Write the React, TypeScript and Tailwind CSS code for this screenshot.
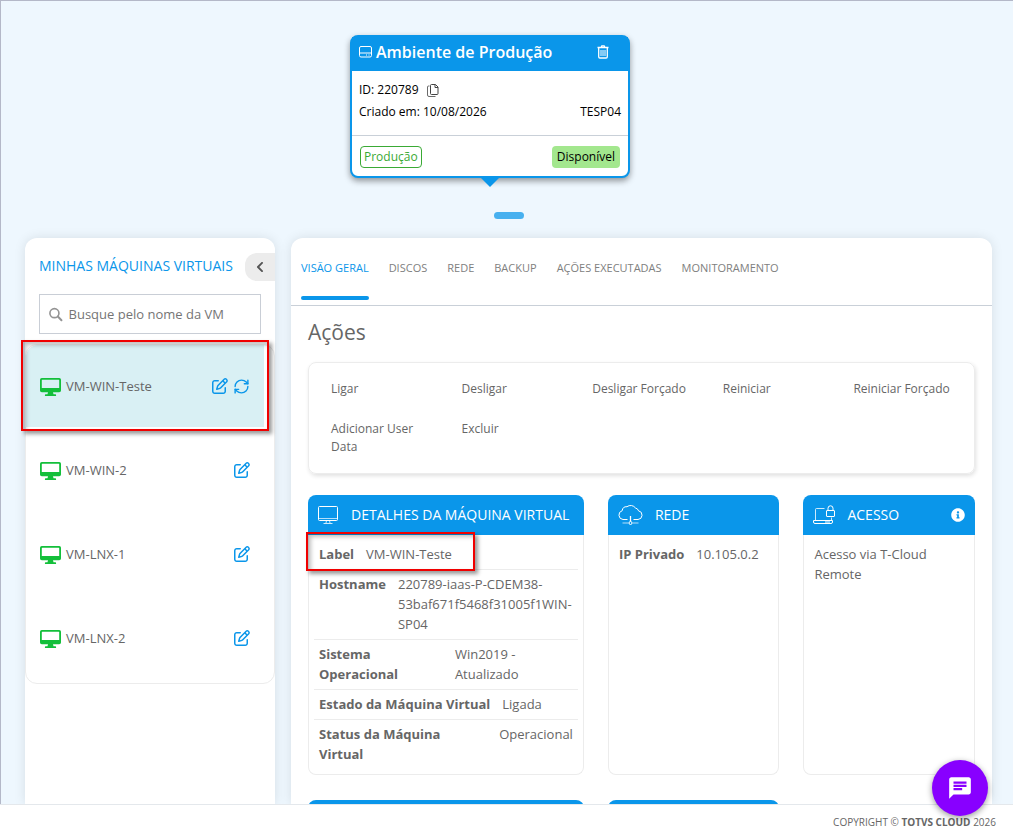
import { RefreshCw } from "lucide-react";
import { FaChevronLeft, FaInfoCircle } from "react-icons/fa";
import { FaRegPenToSquare } from "react-icons/fa6";
import { MdChat } from "react-icons/md";

const machines = ["VM-WIN-Teste", "VM-WIN-2", "VM-LNX-1", "VM-LNX-2"];

const tabs = [
  "VISÃO GERAL",
  "DISCOS",
  "REDE",
  "BACKUP",
  "AÇÕES EXECUTADAS",
  "MONITORAMENTO",
];

const actions = [
  "Ligar",
  "Desligar",
  "Desligar Forçado",
  "Reiniciar",
  "Reiniciar Forçado",
  "Adicionar User Data",
  "Excluir",
];

const details = [
  { label: "Label", value: "VM-WIN-Teste", highlight: true },
  { label: "Hostname", value: "220789-iaas-P-CDEM38-53baf671f5468f31005f1WIN-SP04" },
  { label: "Sistema Operacional", value: "Win2019 - Atualizado" },
  { label: "Estado da Máquina Virtual", value: "Ligada" },
  { label: "Status da Máquina Virtual", value: "Operacional" },
];

function DriveIcon() {
  return (
    <svg width="13" height="12" viewBox="0 0 13 12" fill="none" stroke="white">
      <rect x=".5" y=".5" width="12" height="10.500" rx="1.500" />
      <path d="M.5 7h12M7 9h1M9.500 9h1" />
    </svg>
  );
}

function TrashIcon() {
  return (
    <svg width="12" height="14" viewBox="0 0 12 14" fill="none" stroke="white">
      <path d="M.5 2.500h11M4 2.500l.8-1.700h2.400L8 2.500" strokeWidth="1.300" />
      <path d="M1.700 3v8.800a1.200 1.200 0 0 0 1.200 1.200h6.200a1.200 1.200 0 0 0 1.200-1.200V3" strokeWidth="1.300" />
      <path d="M4 5v6M6 5v6M8 5v6" />
    </svg>
  );
}

function CopyIcon() {
  return (
    <svg width="12" height="13" viewBox="0 0 12 13" fill="none" stroke="#444">
      <path d="M3.500 1.500a1 1 0 0 1 1-1H8.500L11 3v6.500a1 1 0 0 1-1 1H4.500a1 1 0 0 1-1-1z" />
      <path d="M8 .5V3.500h3" />
      <path d="M2.500 2h-1a1 1 0 0 0-1 1v8a1.500 1.500 0 0 0 1.500 1.500h6.500" strokeWidth=".8" />
    </svg>
  );
}

function SearchIcon() {
  return (
    <svg width="15" height="15" viewBox="0 0 15 15" fill="none" stroke="#949494">
      <circle cx="6" cy="6" r="5" strokeWidth="1.800" />
      <path d="M9.800 9.800l4 4" strokeWidth="2.200" strokeLinecap="round" />
    </svg>
  );
}

function DesktopIcon() {
  return (
    <svg width="21" height="18" viewBox="0 0 21 18" fill="#13bf3a">
      <path
        fillRule="evenodd"
        d="M1.800 0h17.400A1.800 1.800 0 0 1 21 1.800v10.700a1.800 1.800 0 0 1-1.800 1.800H13l.5 2h1.800a.8.8 0 0 1 0 1.700H5.700a.8.8 0 0 1 0-1.700h1.800l.5-2H1.800A1.800 1.800 0 0 1 0 12.500V1.800A1.800 1.800 0 0 1 1.800 0zM2.300 1.800a.5.5 0 0 0-.5.5V10h17.400V2.300a.5.500 0 0 0-.5-.5z"
      />
    </svg>
  );
}

function MonitorIcon() {
  return (
    <svg width="21" height="19" viewBox="0 0 21 19" fill="none" stroke="white">
      <rect x=".5" y=".5" width="19" height="14" rx="1" />
      <path d="M1 12.500h18.500" strokeWidth=".7" />
      <path d="M8.500 14.500l-.5 2.500M11.500 14.500l.5 2.500M5.500 17.500h9" strokeWidth=".8" />
    </svg>
  );
}

function CloudIcon() {
  return (
    <svg width="25" height="20" viewBox="0 0 25 20" fill="none" stroke="white">
      <path d="M9.500 14.500H5A4.500 4.500 0 0 1 4.200 5.700 4.500 4.500 0 0 1 9 1.700 6 6 0 0 1 17.500 3 4 4 0 0 1 20.500 5.800 4.400 4.400 0 0 1 20 14.500h-4.500" />
      <path d="M12.500 11v5.500" strokeWidth="1.300" />
      <path d="M4.500 18h6M14.500 18h6" strokeWidth=".7" />
      <circle cx="12.500" cy="18" r="1.500" />
    </svg>
  );
}

function LaptopLockIcon() {
  return (
    <svg width="22" height="20" viewBox="0 0 22 20" fill="none" stroke="white">
      <path d="M11.500 3.500h-8a1 1 0 0 0-1 1v11M18.500 12.500v3" strokeWidth=".8" />
      <path d="M.5 15.500h19v1.500a1.500 1.500 0 0 1-1.500 1.500H2A1.500 1.500 0 0 1 .5 17zM12 17h5" />
      <rect x="13.500" y="5.500" width="8" height="6" rx=".5" />
      <path d="M15 5.500V3.300a2.500 2.500 0 0 1 5 0v2.200" />
    </svg>
  );
}

function EnvironmentCard() {
  return (
    <section className="relative w-[280px] rounded-lg border-2 border-[#0a96ea] bg-white text-xs text-black shadow-[0_3px_6px_rgba(0,0,0,0.4)]">
      <header className="flex h-[34px] items-center gap-1 bg-[#0a96ea] px-[7px] pb-1 text-white">
        <DriveIcon />
        <h1 className="text-base font-semibold">Ambiente de Produção</h1>
        <button className="mr-3 ml-auto" aria-label="Excluir ambiente">
          <TrashIcon />
        </button>
      </header>
      <div className="flex h-16 flex-col gap-[2px] px-[7px] pt-[9px]">
        <div className="flex h-5 items-center gap-2">
          ID: 220789
          <button aria-label="Copiar ID">
            <CopyIcon />
          </button>
        </div>
        <div className="flex h-5 items-center justify-between">
          <span>Criado em: 10/08/2026</span>
          <span>TESP04</span>
        </div>
      </div>
      <div className="flex h-[41px] items-center justify-between border-t border-[#c9d0d8] px-2 pt-[2px]">
        <span className="flex h-[22px] items-center rounded border border-[#3aaa35] px-[3px] text-[#3aaa35]">
          Produção
        </span>
        <span className="flex h-[22px] items-center rounded bg-[#a3e78e] px-[5px]">
          Disponível
        </span>
      </div>
      <div className="absolute top-full left-1/2 -translate-x-1/2 border-x-11 border-t-11 border-x-transparent border-t-[#0a96ea]" />
    </section>
  );
}

function Sidebar() {
  return (
    <aside className="w-[250px] shrink-0 rounded-t-xl bg-white shadow-[0_0_12px_rgba(0,0,0,0.1)]">
      <div className="mt-[15px] flex h-7 items-center justify-between pl-[14px]">
        <h2 className="pb-[2px] text-sm whitespace-nowrap text-[#0a96ea]">
          MINHAS MÁQUINAS VIRTUAIS
        </h2>
        <button
          className="flex h-7 w-[30px] items-center justify-center rounded-l-xl bg-[#ececec] text-[#555]"
          aria-label="Recolher"
        >
          <FaChevronLeft size={12} />
        </button>
      </div>
      <label className="mx-[14px] mt-[13px] flex h-10 items-center gap-[6px] border border-[#c9ced6] px-[9px]">
        <SearchIcon />
        <input
          className="w-full pt-px text-[13px] outline-none placeholder:text-[#757575]"
          placeholder="Busque pelo nome da VM"
          aria-label="Busque pelo nome da VM"
        />
      </label>
      <ul className="mt-[10px] rounded-xl border border-[#ececec] pb-[2px]">
        {machines.map((name, index) => (
          <li key={name} className="relative h-[84px]">
            <div
              className={
                index === 0
                  ? "mr-[10px] flex h-[82px] items-center rounded-tl-xl bg-[#d9f0f4] px-[14px] pt-[2px]"
                  : "mr-[10px] flex h-[82px] items-center px-[14px] pt-[2px]"
              }
            >
              <DesktopIcon />
              <span className="ml-[5px] text-[13px]">{name}</span>
              <div className="mb-[2px] ml-auto flex gap-[5px] text-[#0a96ea]">
                <button aria-label={"Editar " + name}>
                  <FaRegPenToSquare size={16} />
                </button>
                {index === 0 && (
                  <button aria-label={"Atualizar " + name}>
                    <RefreshCw size={17} />
                  </button>
                )}
              </div>
            </div>
            {index === 0 && (
              <div className="absolute -top-[5px] right-[5px] -bottom-[2px] -left-[5px] border-2 border-[#f00000] shadow-[3px_3px_4px_rgba(0,0,0,0.4),inset_3px_3px_4px_rgba(0,0,0,0.25)]" />
            )}
          </li>
        ))}
      </ul>
    </aside>
  );
}

function Card({ icon, title, info, children }: any) {
  return (
    <section className="flex flex-col">
      <header className="flex h-10 shrink-0 items-center gap-3 rounded-t-lg bg-[#0a96ea] px-[10px] text-white">
        {icon}
        <h3 className="text-sm whitespace-nowrap">{title}</h3>
        {info && (
          <button className="ml-auto" aria-label="Informações">
            <FaInfoCircle size={14} />
          </button>
        )}
      </header>
      <div className="grow rounded-b-lg border border-t-0 border-[#ececec] px-[5px] pt-[5px] text-[13px] leading-5">
        {children}
      </div>
    </section>
  );
}

function Overview() {
  return (
    <main className="min-w-0 flex-1 rounded-t-xl bg-white shadow-[0_0_12px_rgba(0,0,0,0.1)]">
      <nav className="flex h-[68px] gap-5 border-b border-[#c9d0d8] px-[10px] text-[11px] text-[#808080]">
        {tabs.map((tab, index) => (
          <button
            key={tab}
            className={
              index === 0
                ? "relative h-[60px] whitespace-nowrap text-[#0a96ea]"
                : "h-[60px] whitespace-nowrap"
            }
          >
            {tab}
            {index === 0 && (
              <span className="absolute inset-x-0 -bottom-[2px] h-1 rounded-full bg-[#0a96ea]" />
            )}
          </button>
        ))}
      </nav>
      <div className="px-[17px]">
        <h2 className="mt-[10px] text-[21px] leading-8">Ações</h2>
        <div className="mt-[14px] grid grid-cols-5 gap-x-8 gap-y-[22px] rounded-lg border border-[#ececec] px-[22px] py-[17px] text-xs leading-[18px] shadow-[1px_2px_4px_rgba(0,0,0,0.12)]">
          {actions.map((action) => (
            <button key={action} className="self-start text-left">
              {action}
            </button>
          ))}
        </div>
        <div className="mt-[21px] grid grid-cols-[275fr_171fr_171fr] grid-rows-[280px_280px] gap-x-6 gap-y-[25px]">
          <Card icon={<MonitorIcon />} title="DETALHES DA MÁQUINA VIRTUAL">
            <dl>
              {details.map((row) => (
                <div
                  key={row.label}
                  className="relative flex gap-3 border-b border-[#ececec] px-[5px] pt-1 pb-[5px] last:border-b-0"
                >
                  <dt className="font-bold">{row.label}</dt>
                  <dd>{row.value}</dd>
                  {row.highlight && (
                    <div className="absolute -top-2 -left-2 h-[39px] w-[169px] border-2 border-[#f00000] shadow-[3px_3px_4px_rgba(0,0,0,0.4),inset_3px_3px_4px_rgba(0,0,0,0.25)]" />
                  )}
                </div>
              ))}
            </dl>
          </Card>
          <Card icon={<CloudIcon />} title="REDE">
            <dl className="flex gap-3 px-[5px] pt-1">
              <dt className="font-bold">IP Privado</dt>
              <dd>10.105.0.2</dd>
            </dl>
          </Card>
          <Card icon={<LaptopLockIcon />} title="ACESSO" info>
            <p className="px-[5px] pt-1">Acesso via T-Cloud Remote</p>
          </Card>
          <Card />
          <Card />
        </div>
      </div>
    </main>
  );
}

export default function App() {
  return (
    <div className="flex h-screen flex-col bg-white font-['Open_Sans',sans-serif] text-[#666]">
      <div className="flex min-h-0 flex-1 flex-col overflow-hidden border-t border-l border-[#b4b8c8] bg-[#eef7fe]">
        <div className="flex justify-center pt-[34px] pr-[34px]">
          <EnvironmentCard />
        </div>
        <button
          className="mt-[34px] ml-1 h-[7px] w-[30px] shrink-0 self-center rounded-full bg-[#47b0ef]"
          aria-label="Página 1"
        />
        <div className="mt-[19px] flex min-h-0 flex-1 gap-4 pr-[21px] pl-6">
          <Sidebar />
          <Overview />
        </div>
      </div>
      <footer className="flex h-[34px] shrink-0 items-center justify-end border-t border-[#e4e8ec] pt-[2px] pr-[17px] text-[10px]">
        <span>
          COPYRIGHT © <strong>TOTVS CLOUD</strong> 2026
        </span>
      </footer>
      <button
        className="fixed right-[25px] bottom-[22px] flex size-14 items-center justify-center rounded-full bg-[#8800ff] text-white shadow-[0_2px_6px_rgba(0,0,0,0.4)]"
        aria-label="Abrir chat"
      >
        <MdChat size={26} />
      </button>
    </div>
  );
}
